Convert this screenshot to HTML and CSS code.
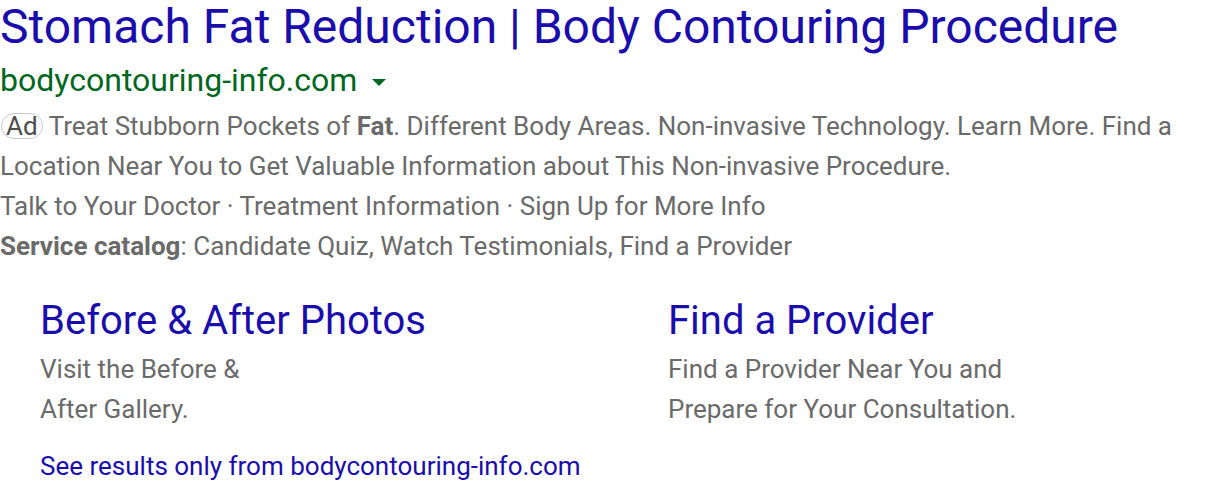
FILE: index.html
```html
<!DOCTYPE html>
<html>
<head>
<meta charset="utf-8">
<link rel="stylesheet" href="styles.css">
</head>
<body>
<div class="ad">
  <a class="title" href="#">Stomach Fat Reduction | Body Contouring Procedure</a>
  <div class="url">bodycontouring-info.com <span class="caret"></span></div>
  <div class="desc"><span class="badge">Ad</span>Treat Stubborn Pockets of <b>Fat</b>. Different Body Areas. Non-invasive Technology. Learn More. Find a<br>Location Near You to Get Valuable Information about This Non-invasive Procedure.</div>
  <div class="line">Talk to Your Doctor · Treatment Information · Sign Up for More Info</div>
  <div class="line"><b>Service catalog</b>: Candidate Quiz, Watch Testimonials, Find a Provider</div>
  <div class="sitelinks">
    <div class="sl">
      <a class="sl-title" href="#">Before &amp; After Photos</a>
      <div class="sl-desc">Visit the Before &amp;<br>After Gallery.</div>
    </div>
    <div class="sl">
      <a class="sl-title" href="#">Find a Provider</a>
      <div class="sl-desc">Find a Provider Near You and<br>Prepare for Your Consultation.</div>
    </div>
  </div>
  <a class="more" href="#">See results only from bodycontouring-info.com</a>
</div>
</body>
</html>
```
FILE: styles.css
```css
html, body {
  margin: 0;
  padding: 0;
  background: #fff;
}
body {
  font-family: Roboto, "Liberation Sans", Arial, sans-serif;
  width: 1216px;
  height: 488px;
  overflow: hidden;
}
a { text-decoration: none; }
.ad {
  display: flex;
  flex-direction: column;
  align-items: flex-start;
}
.title {
  color: #1a0dab;
  font-size: 48px;
  line-height: 54px;
  white-space: nowrap;
}
.url {
  color: #006621;
  font-size: 32px;
  line-height: 52px;
  display: flex;
  align-items: center;
  gap: 15px;
}
.caret {
  width: 0;
  height: 0;
  border-left: 7px solid transparent;
  border-right: 7px solid transparent;
  border-top: 7px solid #006621;
  margin-top: 4px;
}
.desc, .line {
  color: #6a6a6a;
  font-size: 26px;
  line-height: 40px;
}
.desc { white-space: nowrap; }
.desc b, .line b { color: #6a6a6a; font-weight: 700; }
.badge {
  display: inline-block;
  border: 1px solid #c9c9c9;
  border-radius: 13px;
  padding: 0 4px;
  line-height: 24px;
  color: #4d4d4d;
  margin-left: 1px;
  margin-right: 6px;
}
.sitelinks {
  display: grid;
  grid-template-columns: 628px 1fr;
  padding-left: 40px;
  margin-top: 27px;
  align-self: stretch;
}
.sl-title {
  color: #1a0dab;
  font-size: 40px;
  line-height: 56px;
  display: block;
}
.sl-desc {
  color: #6a6a6a;
  font-size: 26px;
  line-height: 40px;
}
.more {
  color: #1a0dab;
  font-size: 26px;
  line-height: 40px;
  margin-left: 40px;
  margin-top: 17px;
}
```
